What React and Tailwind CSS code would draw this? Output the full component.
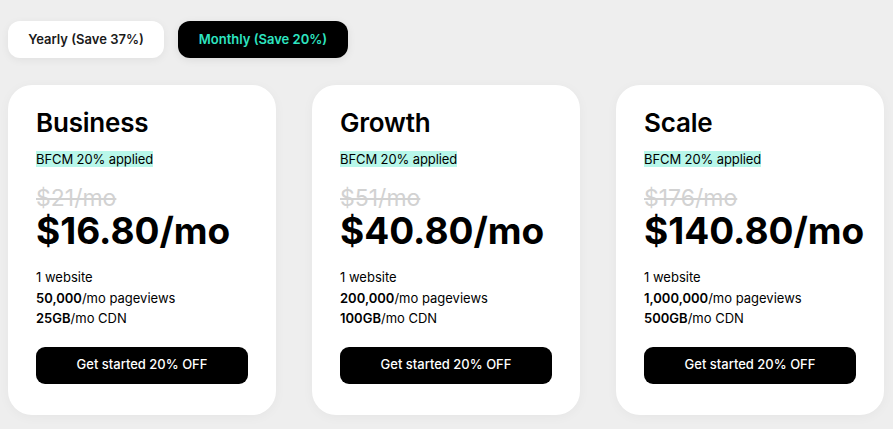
import React from "react";

const plans = [
  { name: "Business", old: "$21/mo", price: "$16.80/mo", views: "50,000", cdn: "25GB" },
  { name: "Growth", old: "$51/mo", price: "$40.80/mo", views: "200,000", cdn: "100GB" },
  { name: "Scale", old: "$176/mo", price: "$140.80/mo", views: "1,000,000", cdn: "500GB" },
];

const PlanCard = ({ plan }) => (
  <div className="w-[268px] bg-white rounded-[24px] pl-7 pr-7 pt-[22px] pb-[31px] shadow-[0_2px_12px_rgba(0,0,0,0.04)]">
    <h2 className="text-[26px] leading-[32px] font-semibold text-black tracking-[-0.2px]">{plan.name}</h2>
    <div className="mt-[7px]">
      <span className="bg-[#b8f7ea] text-[13px] leading-[16px] text-black inline-block tracking-[-0.1px]">BFCM 20% applied</span>
    </div>
    <div className="mt-[16px] text-[23px] leading-[24px] text-[#d2d2d2] line-through">{plan.old}</div>
    <div className="mt-[1px] text-[37px] leading-[40px] font-bold text-black">{plan.price}</div>
    <ul className="mt-[16px] text-[13px] leading-[20.5px] text-black">
      <li>1 website</li>
      <li><span className="font-semibold">{plan.views}</span>/mo pageviews</li>
      <li><span className="font-semibold">{plan.cdn}</span>/mo CDN</li>
    </ul>
    <button className="mt-[18px] w-[212px] h-[37px] bg-black text-white rounded-[9px] text-[13px] font-medium">
      Get started 20% OFF
    </button>
  </div>
);

export default function App() {
  return (
    <div className="w-[893px] h-[429px] bg-[#eeeeee] font-['Inter',sans-serif] pl-2 pt-[21px]">
      <div className="flex gap-[14px]">
        <button className="w-[156px] h-[37px] bg-white rounded-[12px] text-[13px] font-semibold text-[#1a1a1a] shadow-[0_2px_8px_rgba(0,0,0,0.06)]">
          Yearly (Save 37%)
        </button>
        <button className="w-[170px] h-[37px] bg-black rounded-[12px] text-[13px] font-semibold text-[#2ee5c1] shadow-[0_2px_8px_rgba(0,0,0,0.08)]">
          Monthly (Save 20%)
        </button>
      </div>
      <div className="flex gap-[36px] mt-[27px]">
        {plans.map((p) => (
          <PlanCard key={p.name} plan={p} />
        ))}
      </div>
    </div>
  );
}
